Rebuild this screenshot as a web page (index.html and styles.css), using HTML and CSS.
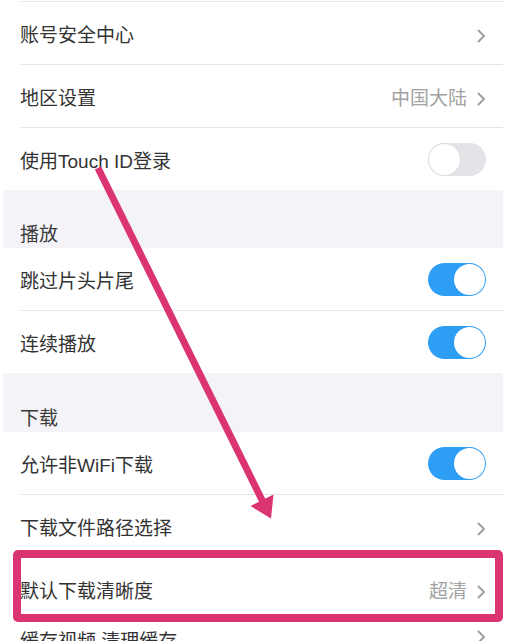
FILE: index.html
```html
<!DOCTYPE html>
<html lang="zh-CN">
<head>
<meta charset="utf-8">
<title>设置</title>
<link rel="stylesheet" href="styles.css">
</head>
<body>
<div class="screen">
  <div class="content">
    <div class="group">
      <div class="row row-partial"><div class="row-inner"></div></div>
      <div class="row"><div class="row-inner"><span class="label">账号安全中心</span><span class="accessory"><svg class="chev" viewBox="0 0 9 14"><polyline points="1.5,1.5 7,7 1.5,12.5"/></svg></span></div></div>
      <div class="row"><div class="row-inner"><span class="label">地区设置</span><span class="accessory"><span class="value">中国大陆</span><svg class="chev" viewBox="0 0 9 14"><polyline points="1.5,1.5 7,7 1.5,12.5"/></svg></span></div></div>
      <div class="row"><div class="row-inner"><span class="label">使用Touch ID登录</span><span class="toggle"></span></div></div>
    </div>
    <div class="section-header">播放</div>
    <div class="group">
      <div class="row"><div class="row-inner"><span class="label">跳过片头片尾</span><span class="toggle on"></span></div></div>
      <div class="row"><div class="row-inner"><span class="label">连续播放</span><span class="toggle on"></span></div></div>
    </div>
    <div class="section-header section-header-tall">下载</div>
    <div class="group">
      <div class="row"><div class="row-inner"><span class="label">允许非WiFi下载</span><span class="toggle on"></span></div></div>
      <div class="row"><div class="row-inner"><span class="label">下载文件路径选择</span><span class="accessory"><svg class="chev" viewBox="0 0 9 14"><polyline points="1.5,1.5 7,7 1.5,12.5"/></svg></span></div></div>
      <div class="row"><div class="row-inner"><span class="label">默认下载清晰度</span><span class="accessory"><span class="value">超清</span><svg class="chev" viewBox="0 0 9 14"><polyline points="1.5,1.5 7,7 1.5,12.5"/></svg></span></div></div>
      <div class="row"><div class="row-inner row-inner-top"><span class="label">缓存视频 清理缓存</span><span class="accessory"><svg class="chev" viewBox="0 0 9 14"><polyline points="1.5,1.5 7,7 1.5,12.5"/></svg></span></div></div>
    </div>
  </div>

  <div class="highlight"></div>
  <svg class="annotation" viewBox="0 0 507 641" width="507" height="641">
    <line x1="98" y1="168" x2="263" y2="502" class="arrow-line"/>
    <polygon points="250.5,506 273.5,494.5 271,518.5" class="arrow-head"/>
  </svg>
</div>
</body>
</html>
```

FILE: styles.css
```css
* { box-sizing: border-box; }

html, body {
  margin: 0;
  padding: 0;
  background: #ffffff;
}

.screen {
  position: relative;
  width: 507px;
  height: 641px;
  overflow: hidden;
  background: #ffffff;
  font-family: "Liberation Sans", "Noto Sans CJK SC", sans-serif;
  color: #333333;
}

.content {
  margin: 0 4px 0 3px;
  background: #f4f3f7;
  display: flex;
  flex-direction: column;
}

.group {
  background: #ffffff;
  display: flex;
  flex-direction: column;
}

.row {
  padding-left: 17px;
  background: #ffffff;
}

.row-inner {
  height: 63px;
  display: flex;
  align-items: center;
  justify-content: space-between;
  padding-right: 17px;
  border-bottom: 1px solid #e6e6e8;
}

.row:last-child .row-inner {
  height: 62px;
  border-bottom: none;
}

.row-partial .row-inner {
  height: 2px;
}

.row-inner-top {
  align-items: flex-start;
  padding-top: 4px;
}

.label {
  font-size: 19px;
  line-height: 22px;
  padding-top: 6px;
  color: #333333;
  white-space: nowrap;
}

.accessory {
  display: flex;
  align-items: center;
  gap: 10px;
  padding-top: 5px;
}

.value {
  font-size: 19px;
  line-height: 22px;
  color: #a2a2a2;
}

.chev {
  width: 9px;
  height: 14px;
  display: block;
}

.chev polyline {
  fill: none;
  stroke: #a0a0a0;
  stroke-width: 2;
  stroke-linecap: round;
  stroke-linejoin: round;
}

.toggle {
  position: relative;
  width: 58px;
  height: 33px;
  border-radius: 17px;
  background: #e4e4e8;
  flex: none;
}

.toggle::after {
  content: "";
  position: absolute;
  top: 1px;
  left: 1px;
  width: 31px;
  height: 31px;
  border-radius: 50%;
  background: #ffffff;
  box-shadow: 0 0 0 1px #dcdce0;
}

.toggle.on {
  background: #2e9ef4;
}

.toggle.on::after {
  left: auto;
  right: 1.5px;
  box-shadow: none;
}

.section-header {
  height: 58px;
  display: flex;
  align-items: flex-end;
  padding: 0 0 2px 17px;
  font-size: 19px;
  line-height: 22px;
  color: #3a3a3a;
}

.section-header-tall {
  height: 59px;
}

.highlight {
  position: absolute;
  left: 13px;
  top: 550px;
  width: 490px;
  height: 72px;
  border: 8px solid #db3472;
  border-radius: 5px;
}

.annotation {
  position: absolute;
  left: 0;
  top: 0;
  pointer-events: none;
}

.arrow-line {
  stroke: #db3472;
  stroke-width: 7;
  stroke-linecap: butt;
}

.arrow-head {
  fill: #db3472;
}
```
